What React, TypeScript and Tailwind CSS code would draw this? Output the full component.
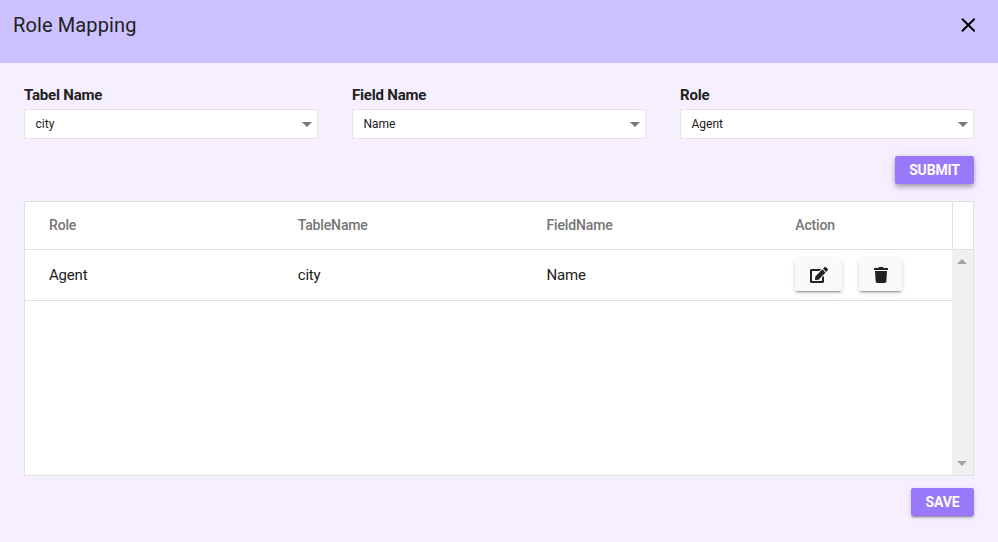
import React from "react";
import { FaEdit, FaTrash } from "react-icons/fa";

function Field({ label, value }: { label: string; value: string }) {
  return (
    <div className="w-[294px]">
      <div className="h-[23px] text-[15px] leading-[18px] font-bold tracking-[-0.2px]">{label}</div>
      <div className="flex h-[30px] items-center justify-between border border-[#e4e4e4] bg-white pr-[5px] pl-[10.5px] text-[12px]">
        <span>{value}</span>
        <span className="border-x-[5px] border-t-[5px] border-x-transparent border-t-[#757575]" />
      </div>
    </div>
  );
}

const raised = "shadow-[0_3px_1px_-2px_rgba(0,0,0,0.2),0_2px_2px_0_rgba(0,0,0,0.14),0_1px_5px_0_rgba(0,0,0,0.12)]";
const focused = "shadow-[0_2px_4px_-1px_rgba(0,0,0,0.2),0_4px_5px_0_rgba(0,0,0,0.14),0_1px_10px_0_rgba(0,0,0,0.12)]";

export default function App() {
  return (
    <div className="flex h-[542px] w-[998px] flex-col bg-[#f5efff] font-[Roboto,sans-serif] text-[#212121]">
      <header className="flex h-[63px] justify-between bg-[#cdc1ff] pt-[13px] pr-[23px] pl-[13px]">
        <h1 className="text-[20px] leading-6 tracking-[0.12px]">Role Mapping</h1>
        <svg className="mt-[5px]" width="14" height="14" viewBox="0 0 14 14" stroke="#000" strokeWidth="2" strokeLinecap="round">
          <path d="M1.5 1.2L13.1 12.8M13.1 1.2L1.5 12.8" />
        </svg>
      </header>
      <main className="px-6 pt-[23px]">
        <div className="flex justify-between">
          <Field label="Tabel Name" value="city" />
          <Field label="Field Name" value="Name" />
          <Field label="Role" value="Agent" />
        </div>
        <div className="mt-[17px] flex justify-end">
          <button className={`h-7 w-[79px] rounded-[2px] bg-[#9a78fa] text-[14px] font-bold tracking-[-0.15px] text-white ${focused}`}>SUBMIT</button>
        </div>
        <div className="mt-[17px] flex h-[275px] flex-col border border-[#e0e0e0] bg-white">
          <div className="flex h-12 shrink-0 border-b border-[#e0e0e0] text-[14px] font-medium tracking-[-0.15px] text-[#757575]">
            <div className="grid w-[928px] grid-cols-[248.75px_248.75px_248.75px_1fr] items-center border-r border-[#e0e0e0] pl-6">
              <span>Role</span><span>TableName</span><span>FieldName</span><span>Action</span>
            </div>
          </div>
          <div className="flex grow">
            <div className="w-[927px]">
              <div className="grid h-[51px] grid-cols-[248.75px_248.75px_248.75px_1fr] items-center border-b border-[#e0e0e0] pl-6 text-[15px] tracking-[-0.2px]">
                <span>Agent</span><span>city</span><span>Name</span>
                <span className="flex gap-[17px]">
                  <button className={`flex h-8 w-[47px] items-center justify-center rounded-[2px] bg-[#fafafa] ${raised}`}><FaEdit size={18} /></button>
                  <button className={`flex h-8 w-[43px] items-center justify-center rounded-[2px] bg-[#fafafa] ${raised}`}><FaTrash size={16} /></button>
                </span>
              </div>
            </div>
            <div className="flex grow flex-col items-center justify-between bg-[#f0f0f0] py-[9px] pr-px">
              <span className="border-x-[5px] border-b-[5px] border-x-transparent border-b-[#a3a3a3]" />
              <span className="border-x-[5px] border-t-[5px] border-x-transparent border-t-[#a3a3a3]" />
            </div>
          </div>
        </div>
        <div className="mt-3 flex justify-end">
          <button className={`h-7 w-[63px] rounded-[2px] bg-[#9a78fa] text-[14px] font-bold tracking-[-0.15px] text-white ${raised}`}>SAVE</button>
        </div>
      </main>
    </div>
  );
}
